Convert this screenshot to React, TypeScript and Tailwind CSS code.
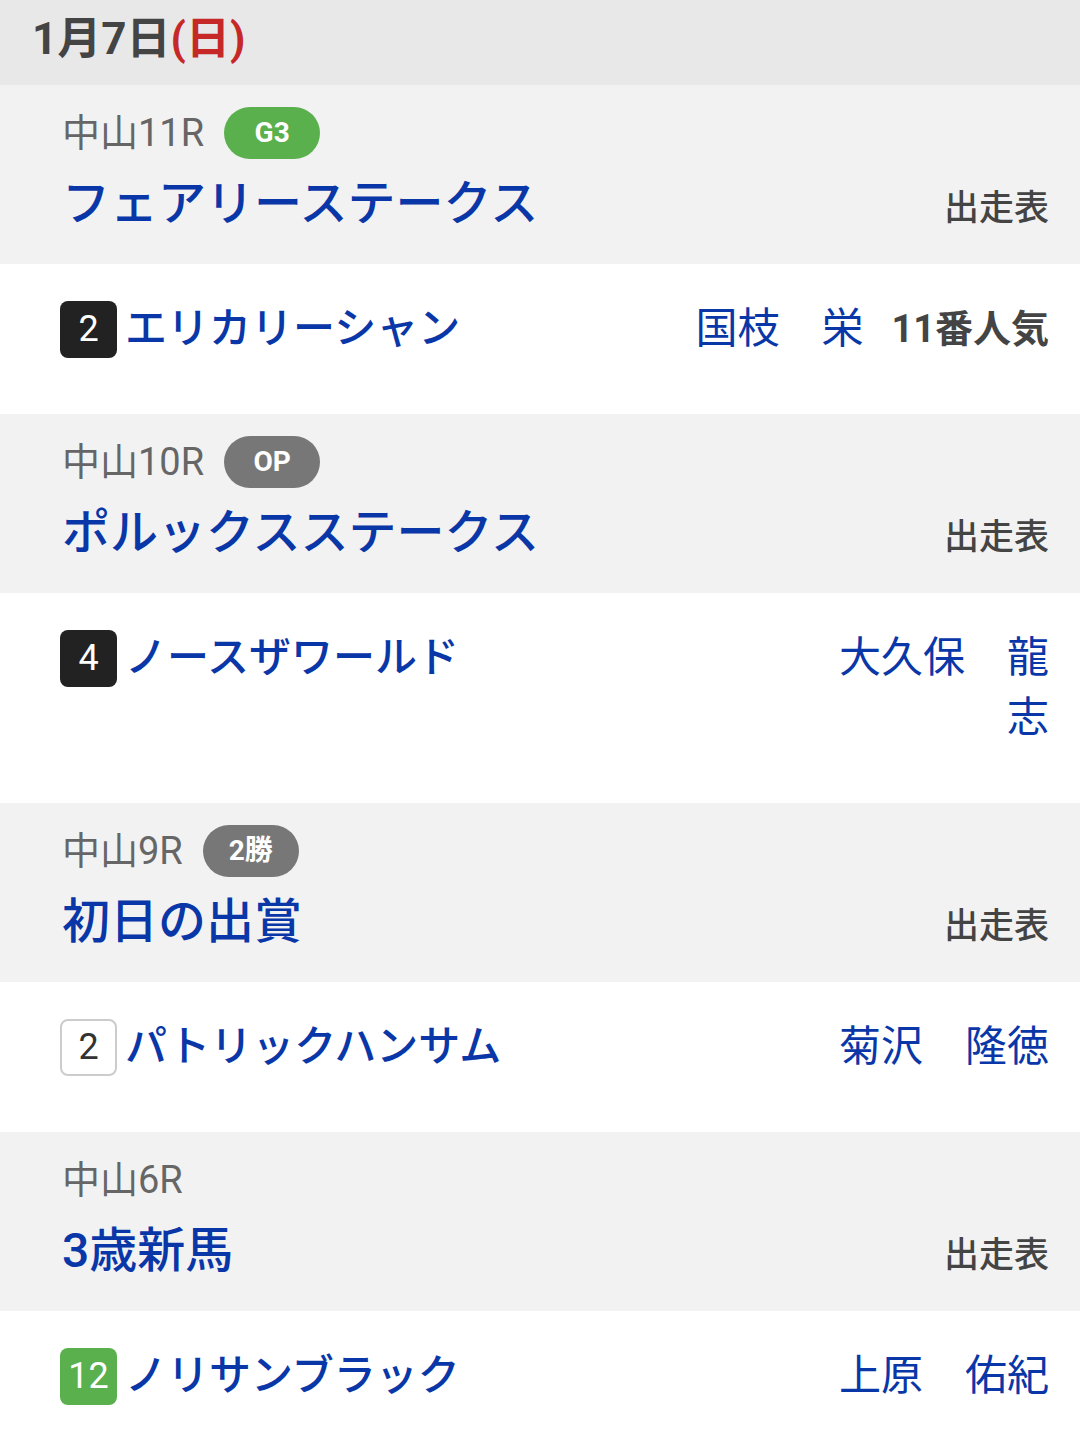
const FONT = 'font-["Roboto","Noto_Sans_CJK_JP",sans-serif]';

type Race = {
  course: string;
  grade?: { label: string; tone: 'green' | 'gray' };
  name: string;
  horse: {
    num: string;
    frame: 'black' | 'white' | 'green';
    name: string;
    jockey: string;
    pop?: string;
  };
};

const races: Race[] = [
  {
    course: '中山11R',
    grade: { label: 'G3', tone: 'green' },
    name: 'フェアリーステークス',
    horse: { num: '2', frame: 'black', name: 'エリカリーシャン', jockey: '国枝　栄', pop: '11番人気' },
  },
  {
    course: '中山10R',
    grade: { label: 'OP', tone: 'gray' },
    name: 'ポルックスステークス',
    horse: { num: '4', frame: 'black', name: 'ノースザワールド', jockey: '大久保　龍志' },
  },
  {
    course: '中山9R',
    grade: { label: '2勝', tone: 'gray' },
    name: '初日の出賞',
    horse: { num: '2', frame: 'white', name: 'パトリックハンサム', jockey: '菊沢　隆徳' },
  },
  {
    course: '中山6R',
    name: '3歳新馬',
    horse: { num: '12', frame: 'green', name: 'ノリサンブラック', jockey: '上原　佑紀' },
  },
];

const frameClass = {
  black: 'bg-[#222222] text-white',
  white: 'bg-white text-[#333333] border-2 border-[#cccccc]',
  green: 'bg-[#5ab04c] text-white',
};

function RaceBlock({ race }: { race: Race }) {
  const { horse } = race;
  return (
    <div>
      {/* race header */}
      <div className="bg-[#f2f2f2] pl-[62px] pr-[31px] pt-[22px] pb-[25px]">
        <div className="flex h-[52px] items-center gap-[20px]">
          <span className="text-[38px] leading-none text-[#666666]">{race.course}</span>
          {race.grade && (
            <span
              className={`flex h-[52px] w-[96px] items-center justify-center rounded-full text-[28px] font-bold text-white ${
                race.grade.tone === 'green' ? 'bg-[#5ab04c]' : 'bg-[#777777]'
              }`}
            >
              {race.grade.label}
            </span>
          )}
        </div>
        <div className="mt-[10px] flex items-end justify-between">
          <span className="text-[48px] font-medium leading-[70px] text-[#0a37a8]">{race.name}</span>
          <span className="pb-[4px] text-[35px] font-medium leading-[52px] text-[#444444]">出走表</span>
        </div>
      </div>

      {/* horse row */}
      <div className="flex items-start justify-between bg-white pl-[60px] pr-[31px] pt-[35px] pb-[55px]">
        <div className="flex h-[60px] items-center gap-[8px]">
          <span
            className={`flex h-[57px] w-[57px] items-center justify-center rounded-[8px] text-[36px] leading-none ${frameClass[horse.frame]}`}
          >
            {horse.num}
          </span>
          <span className="text-[42px] font-medium leading-[60px] text-[#0a37a8]">{horse.name}</span>
        </div>
        <div className="flex items-start gap-[28px]">
          <span className="max-w-[212px] text-right text-[42px] leading-[60px] text-[#0a37a8]">{horse.jockey}</span>
          {horse.pop && (
            <span className="text-[38px] font-bold leading-[60px] text-[#444444]">{horse.pop}</span>
          )}
        </div>
      </div>
    </div>
  );
}

export default function App() {
  return (
    <div className={`min-h-[1450px] w-[1080px] bg-white ${FONT}`}>
      <div className="flex h-[85px] items-center bg-[#e8e8e8] pb-[8px] pl-[32px]">
        <span className="text-[44px] font-bold text-[#444444]">
          1月7日<span className="text-[#c62828]">(日)</span>
        </span>
      </div>
      {races.map((r) => (
        <RaceBlock key={r.course} race={r} />
      ))}
    </div>
  );
}
